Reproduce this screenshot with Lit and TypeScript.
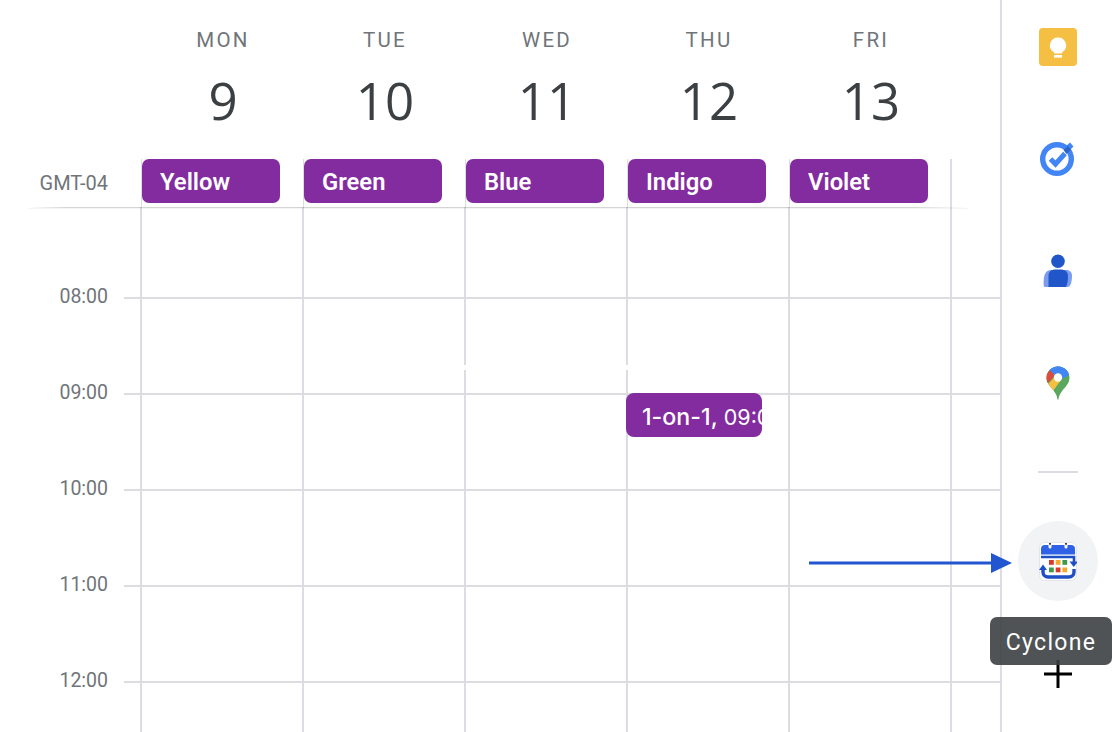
import { LitElement, html, css, svg } from "lit";
import { customElement } from "lit/decorators.js";

const days = [
  { n: "MON", d: "9", c: "Yellow" },
  { n: "TUE", d: "10", c: "Green" },
  { n: "WED", d: "11", c: "Blue" },
  { n: "THU", d: "12", c: "Indigo" },
  { n: "FRI", d: "13", c: "Violet" },
];
const hours = ["07:00", "08:00", "09:00", "10:00", "11:00", "12:00"];

const keep = svg`<svg viewBox="0 0 38 38" width="38" height="38"><rect width="38" height="38" rx="4" fill="#f4bf42"/><path d="M19 9.500a8 8 0 0 0-4.600 14.600c.6.500 1 1 1 1.400h7.200c0-.4.400-.9 1-1.400A8 8 0 0 0 19 9.500z" fill="#fff"/><rect x="15" y="27" width="8" height="2.600" fill="#fff"/></svg>`;
const tasks = svg`<svg viewBox="0 0 40 40" width="40" height="40"><circle cx="19" cy="20" r="14.300" fill="none" stroke="#4285f4" stroke-width="5.400"/><path d="M12.500 20l5 5L27 14.500" fill="none" stroke="#4285f4" stroke-width="5"/><path d="M26 9l6-5.500 3.500 4-6 6z" fill="#4285f4"/><path d="M25.500 11l4.500-4 3 3.500-4.500 4.500z" fill="#2a66c9"/></svg>`;
const contacts = svg`<svg viewBox="0 0 30 34" width="30" height="34"><path d="M8 16h15c4 0 6 2.500 6 5.500 0 5-1 11.500-4.500 11.500H2c-1.500 0-1.500-3-1.300-6C1 20 3 16 8 16z" fill="#7a9df0"/><circle cx="15" cy="7.300" r="6.800" fill="#2156c8"/><path d="M5.500 33V22c0-4.500 3-6.500 7-6.500h5c4 0 7.500 2 7.500 6.500 0 4-.5 8-2 11z" fill="#2156c8"/></svg>`;
const maps = svg`<svg viewBox="0 0 24 34" width="24" height="34"><defs><clipPath id="pin"><path d="M12 0.500C5.500 0.500 0.500 5.500 0.500 11.800c0 3.300 1.300 5.700 3.300 8.300 3 3.800 7 7.500 7.700 13.400h1c.7-5.900 4.700-9.600 7.700-13.400 2-2.600 3.300-5 3.300-8.300C23.500 5.500 18.500 0.500 12 0.500z"/></clipPath></defs><g clip-path="url(#pin)"><rect width="24" height="34" fill="#5aa75d"/><path d="M0 0h24v7L12 12 4 4z" fill="#4285f4"/><path d="M1 19L10 9.500l5 4.500L7 25z" fill="#f4bf42"/><path d="M4 3.500L0 8v10.500L9 10z" fill="#db4c3f"/><path d="M3.500 4L9.500 9.500 20 3 14 -1H6z" fill="#4285f4"/><path d="M10 9l5-6 9 1v4.500l-9 5z" fill="#4285f4"/></g><circle cx="12" cy="11.500" r="4.200" fill="#fff"/></svg>`;
const cyclone = svg`<svg viewBox="0 0 38 39" width="38" height="39"><rect x="0.500" y="0.500" width="37" height="38" rx="5" fill="#fff" stroke="#e3e5ea"/><path d="M2 12.500V7a4 4 0 0 1 4-4h26a4 4 0 0 1 4 4v5.500z" fill="#2f62e6"/><rect x="9.500" y="0" width="3" height="6.500" rx="1.500" fill="#fff"/><rect x="25.500" y="0" width="3" height="6.500" rx="1.500" fill="#fff"/><circle cx="11" cy="1.800" r="1.100" fill="#333"/><circle cx="27" cy="1.800" r="1.100" fill="#333"/><path d="M2 15h33v5" fill="none" stroke="#1f4fc4" stroke-width="2.600"/><path d="M30.500 19.500h8.500l-4.250 5.500z" fill="#1f4fc4"/><path d="M4 27v3a5 5 0 0 0 5 5h21a5 5 0 0 0 5-5v-3" fill="none" stroke="#1f4fc4" stroke-width="3.400"/><path d="M0 28h8L4 22.500z" fill="#1f4fc4"/><rect x="10" y="18" width="4.800" height="4.800" fill="#d9382c"/><rect x="16.700" y="18" width="4.800" height="4.800" fill="#f4a82c"/><rect x="23.400" y="18" width="4.800" height="4.800" fill="#3e9a4a"/><rect x="10" y="25.500" width="4.800" height="4.800" fill="#3e9a4a"/><rect x="16.700" y="25.500" width="4.800" height="4.800" fill="#d9382c"/><rect x="23.400" y="25.500" width="4.800" height="4.800" fill="#f4a82c"/></svg>`;

@customElement("app-root")
export class AppRoot extends LitElement {
  static styles = css`
    :host { display: block; height: 732px; width: 1112px; overflow: hidden; position: relative; background: #fff; font-family: Roboto, "Liberation Sans", sans-serif; }
    .page { display: flex; height: 732px; }
    .main { width: 1000px; flex: none; overflow: hidden; }
    .head { height: 207px; position: relative; z-index: 2; background: #fff; display: flex; flex-direction: column; }
    .head::after { content: ""; position: absolute; left: 28px; width: 940px; top: 207px; height: 1px; background: linear-gradient(90deg, rgba(0,0,0,0) 0, rgba(0,0,0,.17) 40px, rgba(0,0,0,.17) 880px, rgba(0,0,0,0) 940px); box-shadow: 0 1px 1px rgba(0,0,0,.05); }
    .days { display: flex; padding-left: 142px; height: 159px; flex: none; }
    .day { width: 162px; flex: none; text-align: center; position: relative; }
    .dn { font-size: 20.500px; line-height: 24px; margin-top: 28px; letter-spacing: 2.300px; color: #70757a; font-weight: 400; }
    .dd { font-family: "Open Sans", Roboto, sans-serif; font-size: 51px; line-height: 60px; margin-top: 18px; color: #3c4043; }
    .allday { display: flex; height: 48px; }
    .gmt { width: 108px; flex: none; text-align: right; font-size: 20px; line-height: 48px; color: #70757a; margin-right: 33px; }
    .col { width: 162px; flex: none; border-left: 1px solid #dcdce2; box-sizing: border-box; }
    .col.last { border-left-width: 2px; margin-left: -1px; }
    .col.end { width: 2px; }
    .chip { width: 138px; height: 44px; background: #832ca0; color: #fff; border-radius: 7px; font-weight: 600; font-size: 23.800px; line-height: 46px; padding-left: 18px; box-sizing: border-box; }
    .grid { margin-top: -6px; }
    .row { display: flex; height: 96px; }
    .gutter { width: 124px; flex: none; position: relative; }
    .label { position: absolute; right: 16px; top: -12px; font-size: 19.500px; line-height: 24px; color: #70757a; font-weight: 400; }
    .track { flex: 1; display: flex; border-top: 2px solid #dcdce2; box-sizing: border-box; }
    .row:first-child .track { border-top-color: transparent; }
    .pad { width: 16px; flex: none; }
    .cell { width: 162px; flex: none; border-left: 2px solid #dcdce2; box-sizing: border-box; position: relative; }
    .nub { position: absolute; left: -3px; top: 66px; width: 5px; height: 5px; background: #fff; }
    .event { position: absolute; left: -2px; top: -2px; z-index: 1; width: 136px; height: 44px; background: #832ca0; color: #fff; border-radius: 8px; font-size: 21.500px; line-height: 48px; padding-left: 16px; box-sizing: border-box; white-space: nowrap; overflow: hidden; font-family: Inter, Roboto, sans-serif; }
    .event b { font-weight: 500; font-size: 23.200px; }
    .side { flex: 1; border-left: 2px solid #dcdce2; display: flex; flex-direction: column; align-items: center; padding-top: 27px; padding-left: 2px; box-sizing: border-box; position: relative; }
    .slot { height: 40px; width: 40px; display: flex; align-items: center; justify-content: center; margin-bottom: 72px; }
    .rule { width: 40px; height: 2px; background: #dcdce2; margin-top: -4px; flex: none; }
    .active { width: 80px; height: 80px; flex: none; border-radius: 50%; background: #f1f3f4; margin-top: 48px; display: flex; align-items: center; justify-content: center; }
    .plus { width: 28px; height: 28px; flex: none; margin-top: 59px; }
    .tip { position: absolute; left: 990px; top: 617px; width: 122px; height: 48px; border-radius: 7px; background: rgba(60, 64, 67, 0.9); color: #fff; font-size: 23px; line-height: 52px; text-align: center; letter-spacing: 1.300px; box-sizing: border-box; z-index: 4; }
    .arrow { position: absolute; left: 809px; top: 551px; z-index: 3; }
  `;

  render() {
    return html`
      <div class="page">
        <div class="main">
          <div class="head">
            <div class="days">
              ${days.map((d) => html`<div class="day"><div class="dn">${d.n}</div><div class="dd">${d.d}</div></div>`)}
            </div>
            <div class="allday">
              <div class="gmt">GMT-04</div>
              ${days.map((d) => html`<div class="col"><div class="chip">${d.c}</div></div>`)}
              <div class="col last end"></div>
            </div>
          </div>
          <div class="grid">
            ${hours.map(
              (h, i) => html`<div class="row">
                <div class="gutter"><span class="label">${h}</span></div>
                <div class="track">
                  <div class="pad"></div>
                  ${[0, 1, 2, 3, 4, 5].map(
                    (c) => html`<div class="cell">
                      ${i === 1 && (c === 2 || c === 3) ? html`<span class="nub"></span>` : ""}
                      ${i === 2 && c === 3 ? html`<div class="event"><b>1-on-1,</b> 09:00</div>` : ""}
                    </div>`
                  )}
                </div>
              </div>`
            )}
          </div>
        </div>
        <div class="side">
          <div class="slot">${keep}</div>
          <div class="slot">${tasks}</div>
          <div class="slot">${contacts}</div>
          <div class="slot">${maps}</div>
          <div class="rule"></div>
          <div class="active">${cyclone}</div>
          <svg class="plus" viewBox="0 0 28 28"><path d="M0 14h28M14 0v28" stroke="#000" stroke-width="3" fill="none"/></svg>
        </div>
      </div>
      <svg class="arrow" width="204" height="24" viewBox="0 0 204 24"><path d="M0 12h185" stroke="#2255d0" stroke-width="3"/><path d="M182 2l21 10-21 10z" fill="#2255d0"/></svg>
      <div class="tip">Cyclone</div>
    `;
  }
}
